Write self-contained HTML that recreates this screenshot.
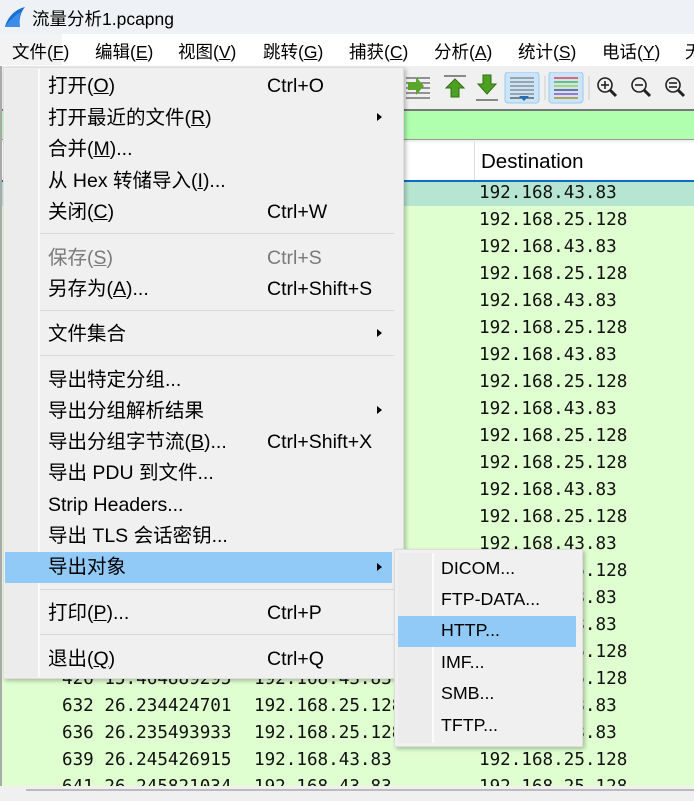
<!DOCTYPE html>
<html><head><meta charset="utf-8"><style>
*{margin:0;padding:0;box-sizing:border-box}
body{width:694px;height:796px;overflow:hidden;position:relative;background:#f0f0f0;font-family:"Liberation Sans","Noto Sans CJK SC",sans-serif;color:#000}
.a{position:absolute;white-space:nowrap}
.mono{font-family:"DejaVu Sans Mono","Liberation Mono",monospace;font-size:17.6px;color:#111}
.mi{position:absolute;left:48px;font-size:19.5px;line-height:22px}
.sc{position:absolute;left:267px;font-size:19.5px;line-height:22px}
.arr{position:absolute;left:377px;width:0;height:0;border-left:5px solid #000;border-top:4px solid transparent;border-bottom:4px solid transparent}
.sep{position:absolute;left:40px;width:354px;height:1px;background:#d8d8d8}
.si{position:absolute;left:441px;font-size:17.8px;line-height:20px}
u{text-decoration:underline}
.mb{position:absolute;top:39px;font-size:17.5px}
</style></head><body>
<div class="a" style="left:0;top:0;width:694px;height:34px;background:#eef2f6"></div>
<svg class="a" style="left:3px;top:6px" width="24" height="22"><path d="M2 21 C4 12 12 3 22 1 C17 7 16 14 17 21 Z" fill="#1a6fd0"/><path d="M2 21 C6 15 12 9 18 6 C16 11 16 16 17 21Z" fill="#3a8ee8"/></svg>
<div class="a" style="left:32px;top:6px;font-size:17.5px">流量分析1.pcapng</div>
<div class="a" style="left:0;top:34px;width:694px;height:32px;background:#fff"></div>
<div class="a" style="left:0;top:34px;width:62px;height:31px;background:#f3f3f3"></div>
<div class="mb" style="left:12px">文件(<u>F</u>)</div>
<div class="mb" style="left:95px">编辑(<u>E</u>)</div>
<div class="mb" style="left:178px">视图(<u>V</u>)</div>
<div class="mb" style="left:263px">跳转(<u>G</u>)</div>
<div class="mb" style="left:349px">捕获(<u>C</u>)</div>
<div class="mb" style="left:434px">分析(<u>A</u>)</div>
<div class="mb" style="left:518px">统计(<u>S</u>)</div>
<div class="mb" style="left:602px">电话(<u>Y</u>)</div>
<div class="mb" style="left:685px">无</div>
<div class="a" style="left:0;top:66px;width:694px;height:43px;background:#f0f0f0"></div>
<svg class="a" style="left:404px;top:72px" width="290" height="32">
<g stroke="#333" stroke-width="1"><line x1="2" y1="6" x2="26" y2="6"/><line x1="2" y1="11" x2="26" y2="11"/><line x1="2" y1="16" x2="26" y2="16"/><line x1="2" y1="21" x2="26" y2="21"/><line x1="2" y1="26" x2="26" y2="26"/></g>
<path d="M4 10 h8 v-5 l8 9 -8 9 v-5 h-8z" fill="#5aa62c"/>
<g transform="translate(38,0)"><line x1="2" y1="4" x2="24" y2="4" stroke="#888" stroke-width="2"/><path d="M13 7 l9 9 h-5 v9 h-8 v-9 h-5z" fill="#4ea024" stroke="#2f7010"/></g>
<g transform="translate(70,0)"><line x1="2" y1="28" x2="24" y2="28" stroke="#888" stroke-width="2"/><path d="M9 3 h8 v9 h5 l-9 10 -9 -10 h5z" fill="#4ea024" stroke="#2f7010"/></g>
<rect x="101" y="0" width="34" height="31" rx="3" fill="#cce4f7" stroke="#99c9ef"/>
<g stroke="#666"><line x1="106" y1="6" x2="130" y2="6"/><line x1="106" y1="10" x2="130" y2="10"/><line x1="106" y1="14" x2="130" y2="14"/><line x1="106" y1="18" x2="130" y2="18"/><line x1="106" y1="22" x2="130" y2="22"/><line x1="106" y1="26" x2="130" y2="26" stroke="#222"/></g>
<path d="M115 24 h10 l-5 5z" fill="#2a6ab0"/>
<line x1="141" y1="4" x2="141" y2="28" stroke="#ccc"/>
<rect x="145" y="0" width="34" height="31" rx="3" fill="#cce4f7" stroke="#99c9ef"/>
<g stroke-width="1.3"><line x1="150" y1="6" x2="174" y2="6" stroke="#d22"/><line x1="150" y1="10" x2="174" y2="10" stroke="#3a3"/><line x1="150" y1="14" x2="174" y2="14" stroke="#9c2"/><line x1="150" y1="18" x2="174" y2="18" stroke="#336"/><line x1="150" y1="22" x2="174" y2="22" stroke="#83a"/><line x1="150" y1="26" x2="174" y2="26" stroke="#a70"/></g>
<line x1="185" y1="4" x2="185" y2="28" stroke="#ccc"/>
<g fill="none" stroke="#222" stroke-width="1.6"><circle cx="201" cy="13" r="7"/><line x1="206" y1="18" x2="212" y2="24" stroke-width="3"/><line x1="197" y1="13" x2="205" y2="13"/><line x1="201" y1="9" x2="201" y2="17"/>
<circle cx="235" cy="13" r="7"/><line x1="240" y1="18" x2="246" y2="24" stroke-width="3"/><line x1="231" y1="13" x2="239" y2="13"/>
<circle cx="269" cy="13" r="7"/><line x1="274" y1="18" x2="280" y2="24" stroke-width="3"/><line x1="265" y1="11" x2="273" y2="11"/><line x1="265" y1="15" x2="273" y2="15"/></g>
</svg>
<div class="a" style="left:0;top:109px;width:694px;height:31px;background:#afffaf;border-top:2px solid #777;border-bottom:1px solid #999"></div>
<div class="a" style="left:0;top:142px;width:694px;height:39px;background:#fff"></div>
<div class="a" style="left:474px;top:142px;width:1px;height:38px;background:#e0e0e0"></div>
<div class="a" style="left:481px;top:150px;font-size:20.5px">Destination</div>
<div class="a" style="left:0;top:180px;width:694px;height:2px;background:#0b6dc9"></div>
<div class="a" style="left:0;top:182px;width:694px;height:604px;background:#e0ffd0"></div>
<div class="a" style="left:0;top:182px;width:694px;height:24px;background:#b6e6d2"></div>
<div class="a mono" style="left:479px;top:180px;line-height:27px">192.168.43.83<br>192.168.25.128<br>192.168.43.83<br>192.168.25.128<br>192.168.43.83<br>192.168.25.128<br>192.168.43.83<br>192.168.25.128<br>192.168.43.83<br>192.168.25.128<br>192.168.25.128<br>192.168.43.83<br>192.168.25.128<br>192.168.43.83<br>192.168.25.128<br>192.168.43.83<br>192.168.43.83<br>192.168.25.128<br>192.168.25.128<br>192.168.43.83<br>192.168.43.83<br>192.168.25.128<br>192.168.25.128</div>
<div class="a mono" style="left:62px;top:666px;line-height:27px">426 15.464889295<br>632 26.234424701<br>636 26.235493933<br>639 26.245426915<br>641 26.245821034</div>
<div class="a mono" style="left:254px;top:666px;line-height:27px">192.168.43.83<br>192.168.25.128<br>192.168.25.128<br>192.168.43.83<br>192.168.43.83</div>
<div class="a" style="left:0;top:786px;width:694px;height:10px;background:#f0f0f0"></div>
<div class="a" style="left:26px;top:789px;width:668px;height:2px;background:#bbb"></div>
<div class="a" style="left:0;top:66px;width:2px;height:720px;background:#aaa"></div>
<div class="a" style="left:3px;top:67px;width:401px;height:612px;background:#f0f0f0;border:1px solid #ddd;box-shadow:2px 2px 4px rgba(0,0,0,.25)">
<div class="a" style="left:1px;top:1px;width:33px;height:608px;background:#ececec"></div>
<div class="a" style="left:34px;top:1px;width:2px;height:608px;background:#fbfbfb"></div>
</div>
<div class="a" style="left:5px;top:552px;width:387px;height:31px;background:#91c9f7"></div>
<div class="mi" style="top:75px">打开(<u>O</u>)</div><div class="sc" style="top:75px">Ctrl+O</div>
<div class="mi" style="top:107px">打开最近的文件(<u>R</u>)</div><div class="arr" style="top:113px"></div>
<div class="mi" style="top:138px">合并(<u>M</u>)...</div>
<div class="mi" style="top:170px">从 Hex 转储导入(<u>I</u>)...</div>
<div class="mi" style="top:201px">关闭(<u>C</u>)</div><div class="sc" style="top:201px">Ctrl+W</div>
<div class="sep" style="top:233px"></div>
<div class="mi" style="top:247px;color:#7a7a7a">保存(<u>S</u>)</div><div class="sc" style="top:247px;color:#7a7a7a">Ctrl+S</div>
<div class="mi" style="top:278px">另存为(<u>A</u>)...</div><div class="sc" style="top:278px">Ctrl+Shift+S</div>
<div class="sep" style="top:310px"></div>
<div class="mi" style="top:323px">文件集合</div><div class="arr" style="top:329px"></div>
<div class="sep" style="top:355px"></div>
<div class="mi" style="top:369px">导出特定分组...</div>
<div class="mi" style="top:400px">导出分组解析结果</div><div class="arr" style="top:406px"></div>
<div class="mi" style="top:431px">导出分组字节流(<u>B</u>)...</div><div class="sc" style="top:431px">Ctrl+Shift+X</div>
<div class="mi" style="top:462px">导出 PDU 到文件...</div>
<div class="mi" style="top:494px">Strip Headers...</div>
<div class="mi" style="top:525px">导出 TLS 会话密钥...</div>
<div class="mi" style="top:556px">导出对象</div><div class="arr" style="top:563px"></div>
<div class="sep" style="top:589px"></div>
<div class="mi" style="top:602px">打印(<u>P</u>)...</div><div class="sc" style="top:602px">Ctrl+P</div>
<div class="sep" style="top:634px"></div>
<div class="mi" style="top:648px">退出(<u>Q</u>)</div><div class="sc" style="top:648px">Ctrl+Q</div>
<div class="a" style="left:394px;top:549px;width:189px;height:198px;background:#f0f0f0;border:1px solid #ddd;box-shadow:2px 2px 4px rgba(0,0,0,.25)">
<div class="a" style="left:3px;top:3px;width:34px;height:190px;background:#ececec"></div>
<div class="a" style="left:37px;top:3px;width:2px;height:190px;background:#fbfbfb"></div>
</div>
<div class="a" style="left:398px;top:616px;width:178px;height:31px;background:#91c9f7"></div>
<div class="si" style="top:558px">DICOM...</div>
<div class="si" style="top:589px">FTP-DATA...</div>
<div class="si" style="top:620px">HTTP...</div>
<div class="si" style="top:652px">IMF...</div>
<div class="si" style="top:683px">SMB...</div>
<div class="si" style="top:715px">TFTP...</div>
</body></html>
